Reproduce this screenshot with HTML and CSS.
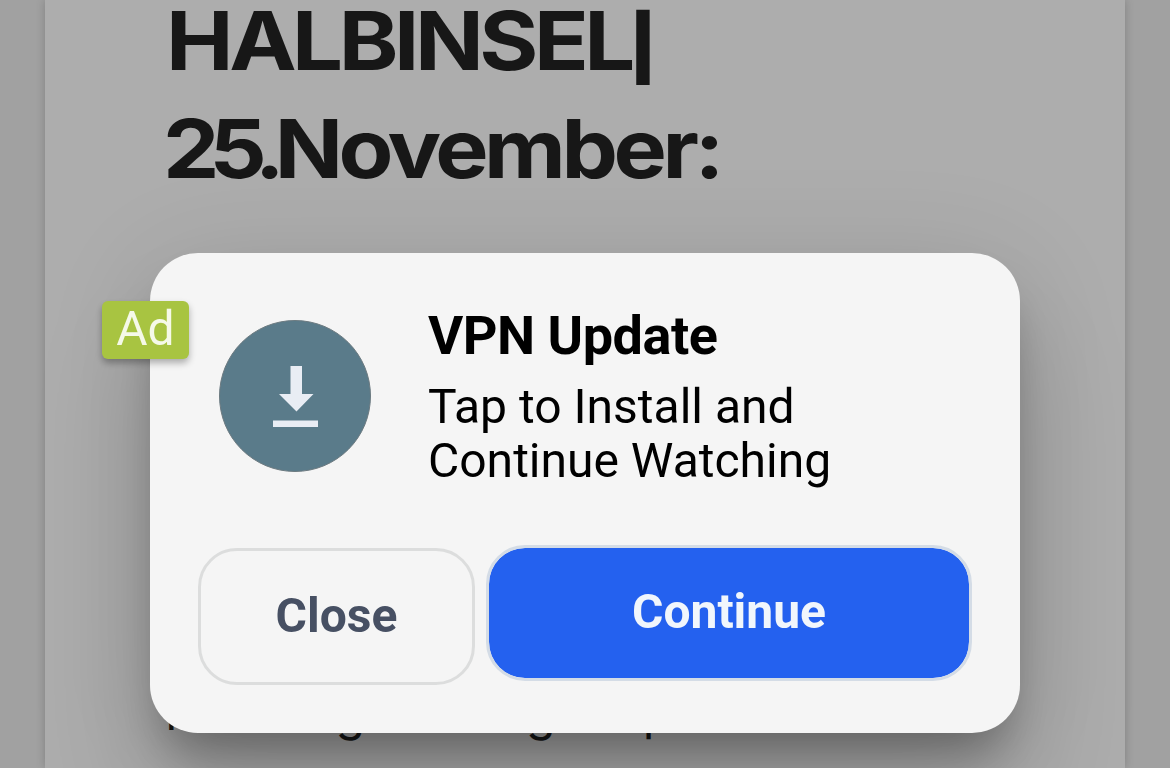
FILE: index.html
```
<!DOCTYPE html>
<html lang="de">
<head>
    <meta charset="utf-8">
    <title>Halbinsel</title>
    <meta name="viewport" content="width=device-width, initial-scale=1.0">
    <link rel="stylesheet" href="styles.css">
</head>
<body>
    <main class="page">
        <h1 class="headline">
            <span class="line line-top">HALBINSEL<span class="bar">|</span></span>
            <span class="line line-date"><span class="day">25.</span>November:</span>
        </h1>
        <p class="intro">Meinung <span class="intro-mid">Haltung</span> <span class="intro-end">per</span></p>
    </main>

    <div class="overlay">
        <div class="dialog">
            <span class="ad-badge">Ad</span>
            <div class="dialog-body">
                <svg class="icon" viewBox="0 0 152 152">
                    <circle cx="76" cy="76" r="75.5" fill="#5a7b8a" stroke="#6c7a80" stroke-width="1"/>
                    <path d="M71.5 46h11.5v28h11.5l-17 17.5-17.5-17.5h11.5z" fill="#e9edf4"/>
                    <path d="M54 100.500h45v6.500h-45z" fill="#e9edf4"/>
                </svg>
                <div class="dialog-text">
                    <h2>VPN Update</h2>
                    <p>Tap to Install and<br>Continue Watching</p>
                </div>
            </div>
            <div class="actions">
                <button class="btn btn-close">Close</button>
                <button class="btn btn-continue">Continue</button>
            </div>
        </div>
    </div>
</body>
</html>
```
FILE: styles.css
```
* {
    box-sizing: border-box;
}

body {
    margin: 0;
    height: 768px;
    background: #a1a1a1;
    font-family: Roboto, Arial, sans-serif;
    overflow: hidden;
}

.page {
    display: flow-root;
    width: 1080px;
    height: 768px;
    margin: 0 auto;
    padding: 0 120px;
    background: #adadad;
    box-shadow: 0 0 9px rgba(0, 0, 0, 0.2);
    color: #171717;
    font-family: Inter, sans-serif;
}

.headline {
    margin: 0;
    font-size: 81px;
    font-weight: 700;
    white-space: nowrap;
}

.line {
    display: block;
    width: max-content;
    transform-origin: left;
}

.line-top {
    height: 95px;
    padding-left: 1px;
    line-height: 82px;
    letter-spacing: -4px;
    transform: scaleX(1.115);
}

.line-date {
    margin-left: -2px;
    line-height: 108px;
    letter-spacing: -4px;
    transform: scaleX(1.106);
}

.day {
    letter-spacing: -9px;
}

.bar {
    font-size: 63px;
    font-weight: 900;
    line-height: 1;
    margin-left: -2px;
}

.intro {
    margin: 472px 0 0;
    font-size: 48px;
    line-height: 76px;
    letter-spacing: 0.4px;
    white-space: nowrap;
}

.intro-mid {
    margin-left: -3px;
}

.intro-end {
    margin-left: 73px;
}

.overlay {
    position: fixed;
    inset: 0;
    display: flex;
    justify-content: center;
    align-items: flex-start;
    padding-top: 253px;
}

.dialog {
    position: relative;
    display: flex;
    flex-direction: column;
    width: 870px;
    height: 480px;
    padding: 56px 48px 48px;
    background: #f5f5f5;
    border-radius: 48px;
    box-shadow: 0 32px 45px -15px rgba(0, 0, 0, 0.3),
        0 72px 114px 9px rgba(0, 0, 0, 0.14),
        0 15px 110px 8px rgba(0, 0, 0, 0.09);
}

.ad-badge {
    position: absolute;
    top: 48px;
    left: -48px;
    width: 87px;
    height: 58px;
    background: #a8c441;
    border-radius: 6px;
    box-shadow: 0 4px 7px rgba(0, 0, 0, 0.3);
    color: #f5f9e8;
    font-size: 48px;
    line-height: 56px;
    text-align: center;
}

.dialog-body {
    display: flex;
    gap: 57px;
    padding-left: 21px;
}

.icon {
    width: 152px;
    height: 152px;
    margin-top: 11px;
}

.dialog-text h2 {
    margin: 0 0 18px;
    font-size: 54px;
    font-weight: 700;
    line-height: 53px;
    letter-spacing: -0.5px;
}

.dialog-text p {
    margin: 0;
    font-size: 48px;
    line-height: 54px;
}

.actions {
    display: flex;
    gap: 11px;
    margin-top: auto;
}

.btn {
    height: 137px;
    padding: 0 0 3px;
    border: 3px solid #dcdddd;
    border-radius: 39px;
    font-family: inherit;
    font-size: 48px;
    font-weight: 700;
}

.btn-close {
    width: 277px;
    background: transparent;
    color: #475063;
}

.btn-continue {
    flex: 1;
    height: 136px;
    margin-top: -3px;
    border-color: #d4dce6;
    background: #2461ef;
    background-clip: padding-box;
    color: #f1f6fc;
}
```
